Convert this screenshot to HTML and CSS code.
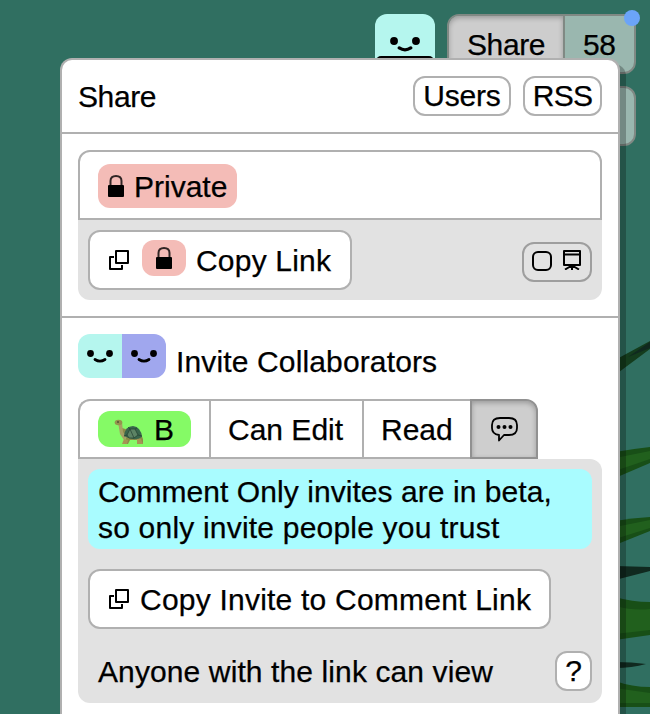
FILE: index.html
```html
<!DOCTYPE html>
<html lang="en">
<head>
<meta charset="utf-8">
<title>Share</title>
<link rel="stylesheet" href="styles.css">
</head>
<body>
<svg width="0" height="0" class="defs">
  <symbol id="copy" viewBox="0 0 20 20"><g fill="none" stroke="#000" stroke-width="2" stroke-linejoin="round"><rect x="7" y="1" width="12" height="12"/><path d="M5 7H1v12h12v-4"/></g></symbol>
  <symbol id="lock" viewBox="0 0 16 22"><path d="M2.500 11V6q0-5 5.500-5t5.500 5v5" fill="none" stroke="#000" stroke-opacity=".8" stroke-width="2"/><rect y="10" width="16" height="12" rx="1"/></symbol>
  <symbol id="face" viewBox="0 0 26 13"><circle cx="3.5" cy="3.5" r="3.4"/><circle cx="22.500" cy="3.500" r="3.400"/><path d="M8 9.500q5 3.200 10 0" fill="none" stroke="#000" stroke-width="2.800" stroke-linecap="round"/></symbol>
</svg>
<svg class="leaves" viewBox="0 0 50 414" width="50" height="414">
  <g fill="#184f17">
    <path d="M15 60L50 41V49L15 75Z" fill="#143c1d"/><path d="M15 152Q32 149 50 147V163L15 178Z"/><path d="M15 221Q32 218 50 217V231L15 245Z"/>
    <path d="M15 297Q32 302 50 302V335L15 340Z"/><path d="M15 381Q32 387 50 387V407H15Z"/>
  </g>
  <g fill="#21601d"><path d="M15 158L50 151V159L15 171Z"/><path d="M15 227L50 220V228L15 239Z"/><path d="M15 306Q34 311 50 309V330L15 334Z"/><path d="M15 388L50 393V403H15Z"/></g>
  <g fill="#10291f"><path d="M15 266L50 267V271L15 280Z"/><path d="M15 362Q32 362 46 364Q32 368 15 368Z"/><path d="M28 57L50 42V48Z"/></g>
</svg>
<header class="topbar">
  <div class="me"><svg class="me-face"><use href="#face"/></svg><span class="me-line"></span></div>
  <div class="side">
    <div class="segmented"><div class="seg-share">Share</div><div class="seg-count">58</div><span class="dot"></span></div>
    <div class="segmented second"></div>
  </div>
</header>
<main class="dialog">
  <section class="head"><span class="title">Share</span><button class="small users">Users</button><button class="small rss">RSS</button></section>
  <section class="privacy">
    <div class="privacy-box"><span class="badge"><svg class="lock"><use href="#lock"/></svg><span class="private">Private</span></span></div>
    <div class="panel link-panel">
      <button class="big"><svg class="copy"><use href="#copy"/></svg><span class="badge mini"><svg class="lock"><use href="#lock"/></svg></span><span class="copy-label">Copy Link</span></button>
      <button class="toggle"><span class="check"></span><svg class="board" viewBox="0 0 18 20"><path d="M1 1h16v14H1zM1 4.500h16M9 15v5M8 16l-6 3.500M10 16l6 3.500" fill="none" stroke="#000" stroke-width="2" stroke-linejoin="round"/></svg></button>
    </div>
  </section>
  <section class="invite">
    <div class="invite-title"><span class="avatars"><i class="mint"><svg class="face"><use href="#face"/></svg></i><i class="violet"><svg class="face"><use href="#face"/></svg></i></span><span class="invite-text">Invite Collaborators</span></div>
    <div class="tabs">
      <div class="tab tab-group"><span class="group">
        <svg class="turtle" viewBox="0 0 30 26"><path d="M5 8L9 16L12 20L9 23V25H14L16 21H23L24 25H29V20L27 15Z" fill="#8b8b48"/><path d="M4 3L8 3L9 13L13 18L10 21L6 15Z" fill="#a6a064"/><ellipse cx="4.500" cy="3.500" rx="3.800" ry="2.800" fill="#95934e"/><path d="M10 17Q11 7 19 7Q27 8 28 18Q20 23 10 17Z" fill="#39654c"/><path d="M13 16L16 10L21 10L24 16L20 19H15ZM16 10L14 8M21 10L23 9M24 16L28 17M13 16L10 17M16 10L20 19" fill="#5c8364" stroke="#243f30" stroke-width=".7"/><path d="M10 20L14 21L13 25H8ZM23 20H27L29 25H23Z" fill="#a69455"/><circle cx="4" cy="3" r=".8" fill="#222"/></svg>B</span></div>
      <div class="tab tab-edit">Can Edit</div><div class="tab tab-read">Read</div>
      <div class="tab tab-comment"><svg class="comment" viewBox="0 0 27 25"><path d="M9 1H18Q26 1 26 8V11Q26 18 18 18H13L8 23.500V18Q1 17 1 11V8Q1 1 9 1Z" fill="none" stroke="#000" stroke-width="1.800" stroke-linejoin="round"/><circle cx="7.500" cy="10" r="2"/><circle cx="13.500" cy="10" r="2"/><circle cx="19.500" cy="10" r="2"/></svg></div>
    </div>
    <div class="panel invite-panel">
      <p class="notice">Comment Only invites are in beta,<br><span class="trust">so only invite people you trust</span></p>
      <button class="big invite-link"><svg class="copy"><use href="#copy"/></svg><span class="invite-label">Copy Invite to Comment Link</span></button>
      <div class="foot"><span class="anyone">Anyone with the link can view</span><button class="small help">?</button></div>
    </div>
  </section>
</main>
</body>
</html>
```
FILE: styles.css
```css
* { box-sizing: border-box; }
body {
  margin: 0; height: 714px; overflow: hidden; position: relative;
  background: #306f61;
  font: 30px/36px "Liberation Sans", Arial, sans-serif; color: #000;
  -webkit-text-stroke: .25px #000;
}
button { font: inherit; color: inherit; margin: 0; padding: 0; background: #fff; border: 2px solid #b0b0b0; }
svg { display: block; flex: none; }
.defs { position: absolute; }
.leaves { position: absolute; right: 0; top: 300px; }
.topbar { display: flex; justify-content: flex-end; gap: 12px; padding: 14px 14px 0 0; }
.me { width: 60px; height: 60px; border-radius: 12px; background: #b5f6ee; display: flex; flex-direction: column; align-items: center; padding-top: 23px; }
.me-face { width: 30px; height: 15px; }
.me-line { width: 58px; height: 12px; margin-top: 4px; border-radius: 5px; background: #000; }
.side { width: 189px; }
.segmented { position: relative; display: flex; height: 60px; border: 2px solid #808984; border-radius: 12px; background: #9ab7af; }
.second { margin-top: 12px; }
.seg-share { width: 116px; padding: 11px 0 0 18px; letter-spacing: -.4px; border-right: 2px solid #808984; border-radius: 10px 0 0 10px; background: #cdcdcd; box-shadow: inset 0 2px 5px rgba(0,0,0,.25); }
.seg-count { padding: 11px 0 0 18px; letter-spacing: -.4px; }
.dot { position: absolute; right: -6px; top: -6px; width: 16px; height: 16px; border-radius: 50%; background: #6ba4f8; }
.dialog {
  position: absolute; left: 60px; top: 58px; width: 560px; height: 656px;
  background: #fff; border: 2px solid #b0b0b0; border-bottom: 0; border-radius: 12px 12px 0 0;
  box-shadow: 6px 6px 0 rgba(0,0,0,.25);
}
.head { height: 74px; display: flex; align-items: center; padding: 0 16px; border-bottom: 2px solid #b0b0b0; }
.title { flex: 1; padding-top: 2px; letter-spacing: -.4px; }
.small { height: 40px; border-radius: 12px; width: 98px; line-height: 36px; }
.users { letter-spacing: -.2px; }
.rss { width: 79px; margin-left: 12px; letter-spacing: -.8px; }
.privacy { padding: 16px; border-bottom: 2px solid #b0b0b0; height: 184px; }
.privacy-box { height: 70px; border: 2px solid #b0b0b0; border-radius: 12px 12px 0 0; padding: 12px 18px; }
.badge { display: flex; align-items: center; width: 139px; height: 44px; padding-left: 10px; gap: 10px; border-radius: 12px; background: #f4bcb7; }
.private { padding-top: 2px; }
.lock { width: 16px; height: 22px; }
.panel { background: #e2e2e2; }
.link-panel { height: 80px; border-radius: 0 0 12px 12px; padding: 10px; display: flex; justify-content: space-between; align-items: flex-start; }
.big { display: flex; align-items: center; width: 264px; height: 60px; border-radius: 12px; padding-left: 18px; }
.mini { width: 44px; height: 36px; padding-left: 14px; margin: 0 10px 4px 13px; }
.copy-label { padding-top: 2px; letter-spacing: .2px; }
.toggle { display: flex; align-items: center; width: 70px; height: 40px; margin-top: 12px; border-color: #9e9e9e; border-radius: 12px; background: transparent; padding-left: 8px; gap: 11px; }
.check { width: 20px; height: 20px; margin-top: -2px; border: 2px solid #000; border-radius: 6px; }
.board { width: 18px; height: 20px; margin-top: -4px; }
.copy { width: 20px; height: 20px; margin-left: 1px; }
.invite { padding: 16px; }
.invite-title { display: flex; height: 65px; }
.avatars { display: flex; width: 88px; height: 44px; border-radius: 12px; overflow: hidden; }
.avatars i { width: 44px; padding: 16px 0 0 9px; }
.mint { background: #b5f6ee; }
.violet { background: #a0a7ee; }
.face { width: 26px; height: 13px; }
.invite-text { padding: 10px 0 0 10px; letter-spacing: .14px; }
.tabs { display: flex; height: 60px; width: 460px; }
.tab { border: 2px solid #b0b0b0; border-right: 0; padding: 11px 0 0 17px; }
.tab-group { width: 131px; border-radius: 12px 0 0; padding: 10px 0 0 18px; }
.group { display: flex; width: 93px; height: 36px; border-radius: 12px; background: #85fa66; padding: 1px 0 0 16px; gap: 10px; }
.turtle { width: 30px; height: 26px; margin-top: 7px; }
.tab-edit { width: 153px; }
.tab-read { width: 108px; }
.tab-comment { width: 68px; border: 2px solid #919191; border-radius: 0 12px 0 0; background: #cecece; padding: 16px 0 0 19px; box-shadow: inset 0 2px 5px rgba(0,0,0,.25); }
.comment { width: 27px; height: 25px; }
.invite-panel { height: 244px; border-radius: 0 12px 12px 12px; padding: 10px; border-top-left-radius: 0; }
.notice { margin: 0 0 20px; height: 80px; padding: 5px 10px; border-radius: 12px; background: #a9fcff; letter-spacing: .06px; }
.trust { letter-spacing: .2px; }
.invite-link { width: 463px; gap: 11px; letter-spacing: .22px; }
.invite-label { padding-top: 2px; }
.foot { display: flex; justify-content: space-between; align-items: center; height: 40px; margin-top: 22px; padding-left: 10px; }
.anyone { padding-top: 2px; letter-spacing: .11px; }
.help { width: 37px; }
```
